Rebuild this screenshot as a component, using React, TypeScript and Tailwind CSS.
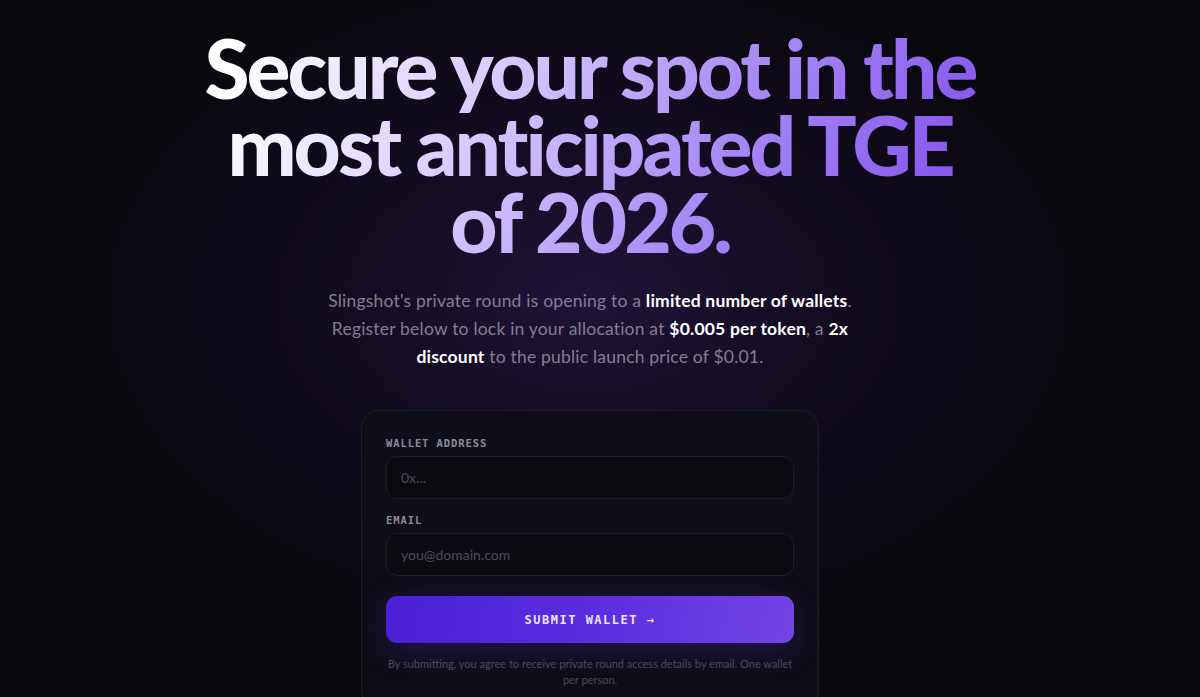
import React from "react";

export default function App() {
  return (
    <div className="relative h-[697px] w-full overflow-hidden bg-[#09080d]">
      <div className="pointer-events-none absolute inset-0 bg-[radial-gradient(ellipse_520px_340px_at_49%_300px,#1f1338_0%,#130c22_45%,rgba(9,8,13,0)_100%)]" />
      <div className="relative flex flex-col items-center pt-[29px] pr-[20px] font-[Lato,'Noto_Sans',sans-serif]">
        <h1 className="text-center text-[82px] leading-[77px] font-black tracking-[-3px] bg-[linear-gradient(115deg,#ffffff_5%,#d9ccff_35%,#a98af5_65%,#8552ee_95%)] bg-clip-text text-transparent">
          Secure your spot in the
          <br />
          most anticipated TGE
          <br />
          of 2026.
        </h1>
        <p className="mt-[27px] w-[560px] text-center text-[17.5px] leading-[28px] tracking-[0.2px] text-[#837e94]">
          Slingshot's private round is opening to a{" "}
          <b className="font-bold text-white">limited number of wallets</b>.
          Register below to lock in your allocation at{" "}
          <b className="font-bold text-white">$0.005 per token</b>, a{" "}
          <b className="font-bold text-white">2x discount</b> to the public
          launch price of $0.01.
        </p>
        <div className="mt-[39px] w-[458px] rounded-[18px] border border-[#1f1d2a] bg-[#100f18]/90 px-[24px] pt-[26px] pb-[20px]">
          <label className="block font-['DejaVu_Sans_Mono',monospace] text-[10.5px] leading-[12px] font-bold tracking-[0.9px] text-[#8e8a9c]">
            WALLET ADDRESS
          </label>
          <div className="mt-[7px] flex h-[43px] items-center rounded-[11px] border border-[#1f1e28] bg-[#0b0a10] px-[14px] text-[14px] text-[#4e4b5a]">
            0x...
          </div>
          <label className="mt-[15px] block font-['DejaVu_Sans_Mono',monospace] text-[10.5px] leading-[12px] font-bold tracking-[0.9px] text-[#8e8a9c]">
            EMAIL
          </label>
          <div className="mt-[7px] flex h-[43px] items-center rounded-[11px] border border-[#1f1e28] bg-[#0b0a10] px-[14px] text-[14px] text-[#4e4b5a]">
            you@domain.com
          </div>
          <button className="mt-[20px] flex h-[47px] w-full items-center justify-center rounded-[11px] bg-[linear-gradient(100deg,#4a1fd6_0%,#5a2ddf_50%,#7444e6_100%)] font-['DejaVu_Sans_Mono',monospace] text-[12px] font-bold tracking-[1.5px] text-[#ece6ff] shadow-[0_8px_30px_rgba(90,45,223,0.25)]">
            SUBMIT WALLET →
          </button>
          <p className="mt-[13px] text-center text-[11px] leading-[16px] text-[#4c4959]">
            By submitting, you agree to receive private round access details by email. One wallet per person.
          </p>
        </div>
      </div>
    </div>
  );
}
